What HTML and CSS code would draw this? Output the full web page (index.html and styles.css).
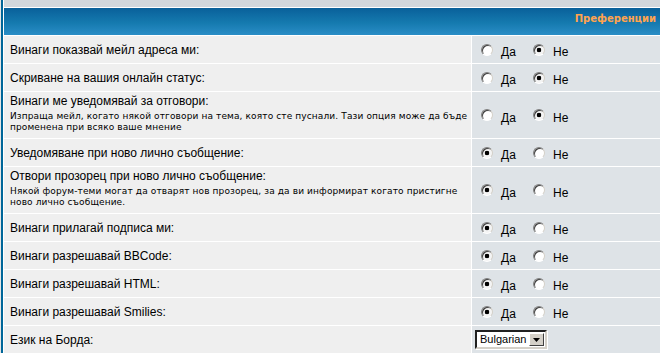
FILE: index.html
```html
<!DOCTYPE html>
<html lang="bg">
<head>
<meta charset="utf-8">
<title>Преференции</title>
<link rel="stylesheet" href="styles.css">
</head>
<body>
<div class="forumline">
  <div class="band"></div>
  <div class="th">Преференции</div>

  <div class="lbl"><span class="gen">Винаги показвай мейл адреса ми:</span></div>
  <div class="opt"><input type="radio" name="viewemail"><span class="lab">Да</span><input type="radio" name="viewemail" checked><span class="lab">Не</span></div>

  <div class="lbl"><span class="gen">Скриване на вашия онлайн статус:</span></div>
  <div class="opt"><input type="radio" name="hideonline"><span class="lab">Да</span><input type="radio" name="hideonline" checked><span class="lab">Не</span></div>

  <div class="lbl tall"><span class="gen">Винаги ме уведомявай за отговори:</span><span class="gensmall">Изпраща мейл, когато някой отговори на тема, която сте пуснали. Тази опция може да бъде променена при всяко ваше мнение</span></div>
  <div class="opt"><input type="radio" name="notifyreply"><span class="lab">Да</span><input type="radio" name="notifyreply" checked><span class="lab">Не</span></div>

  <div class="lbl"><span class="gen">Уведомяване при ново лично съобщение:</span></div>
  <div class="opt"><input type="radio" name="notifypm" checked><span class="lab">Да</span><input type="radio" name="notifypm"><span class="lab">Не</span></div>

  <div class="lbl tall"><span class="gen">Отвори прозорец при ново лично съобщение:</span><span class="gensmall">Някой форум-теми могат да отварят нов прозорец, за да ви информират когато пристигне ново лично съобщение.</span></div>
  <div class="opt"><input type="radio" name="popuppm" checked><span class="lab">Да</span><input type="radio" name="popuppm"><span class="lab">Не</span></div>

  <div class="lbl"><span class="gen">Винаги прилагай подписа ми:</span></div>
  <div class="opt"><input type="radio" name="attachsig" checked><span class="lab">Да</span><input type="radio" name="attachsig"><span class="lab">Не</span></div>

  <div class="lbl"><span class="gen">Винаги разрешавай BBCode:</span></div>
  <div class="opt"><input type="radio" name="allowbbcode" checked><span class="lab">Да</span><input type="radio" name="allowbbcode"><span class="lab">Не</span></div>

  <div class="lbl"><span class="gen">Винаги разрешавай HTML:</span></div>
  <div class="opt"><input type="radio" name="allowhtml" checked><span class="lab">Да</span><input type="radio" name="allowhtml"><span class="lab">Не</span></div>

  <div class="lbl"><span class="gen">Винаги разрешавай Smilies:</span></div>
  <div class="opt"><input type="radio" name="allowsmilies" checked><span class="lab">Да</span><input type="radio" name="allowsmilies"><span class="lab">Не</span></div>

  <div class="lbl"><span class="gen">Език на Борда:</span></div>
  <div class="opt sel-cell">
    <div class="select"><span class="sel-text">Bulgarian</span><span class="sel-btn"><svg width="7" height="4" viewBox="0 0 7 4"><polygon points="0,0 7,0 3.5,4" fill="#000"/></svg></span></div>
  </div>
</div>
</body>
</html>
```

FILE: styles.css
```css
html, body {
  margin: 0;
  padding: 0;
}
body {
  background: #e5e5e5;
  overflow: hidden;
  width: 660px;
  height: 353px;
}
.forumline {
  margin-left: 1px;
  width: 680px;
  border-left: 2px solid #006699;
  padding-left: 1px;
  background: #ffffff;
  display: grid;
  grid-template-columns: 467px 1fr;
  gap: 1px;
}
.band {
  grid-column: 1 / -1;
  height: 7px;
  background: #d1d7dc;
}
.th {
  grid-column: 1 / -1;
  height: 27px;
  box-sizing: border-box;
  padding: 4px 28px 0 0;
  text-align: right;
  font: bold 10px/13px "DejaVu Sans", Verdana, sans-serif;
  color: #ffa34f;
  background: linear-gradient(to bottom, #09609a 0%, #157aaf 55%, #2a8dc6 100%);
}
.lbl {
  background: #efefef;
  min-height: 27px;
  box-sizing: border-box;
  padding: 0 0 0 6px;
  display: flex;
  flex-direction: column;
  justify-content: center;
}
.lbl.tall {
  height: 46px;
  justify-content: flex-start;
  padding-top: 1px;
}
.gen {
  font: 12px/14px "Liberation Sans", Arial, sans-serif;
  color: #000;
  padding-top: 1px;
}
.tall .gen {
  margin-bottom: 3px;
}
.gensmall {
  font: 9px/11px "DejaVu Sans", Verdana, sans-serif;
  letter-spacing: 0.12px;
  color: #000;
}
.opt {
  background: #dee3e7;
  min-height: 27px;
  box-sizing: border-box;
  padding: 0 0 0 9px;
  display: flex;
  align-items: center;
}
.opt input {
  -webkit-appearance: none;
  appearance: none;
  margin: 0;
  width: 12px;
  height: 12px;
  border-radius: 50%;
  box-sizing: border-box;
  border: 1px solid;
  border-color: #7f7f7f #d4d0c8 #ffffff #7f7f7f;
  background: #ffffff;
  box-shadow: inset 1px 1px 0 #404040;
  flex: none;
}
.opt input:checked {
  background: radial-gradient(circle at 50% 50%, #000 0, #000 2px, #f4f4f4 2.6px);
}
.lab {
  font: 12px/14px "Liberation Sans", Arial, sans-serif;
  color: #000;
  margin: 5px 0 0 8px;
  width: 32px;
}
.sel-cell {
  padding-left: 3px;
}
.select {
  width: 72px;
  height: 19px;
  box-sizing: border-box;
  border: 2px solid;
  border-color: #202020 #d4d0c8 #d4d0c8 #202020;
  background: #fff;
  display: flex;
  align-items: stretch;
  box-shadow: 1px 1px 0 #fff;
}
.sel-text {
  flex: 1;
  font: 11px/15px "Liberation Sans", Arial, sans-serif;
  color: #000;
  padding-left: 3px;
}
.sel-btn {
  width: 15px;
  margin: 1px 1px 1px 0;
  background: #d4d0c8;
  box-sizing: border-box;
  border: 1px solid;
  border-color: #ffffff #404040 #404040 #ffffff;
  display: flex;
  align-items: center;
  justify-content: center;
}
.sel-btn svg {
  display: block;
}
```
